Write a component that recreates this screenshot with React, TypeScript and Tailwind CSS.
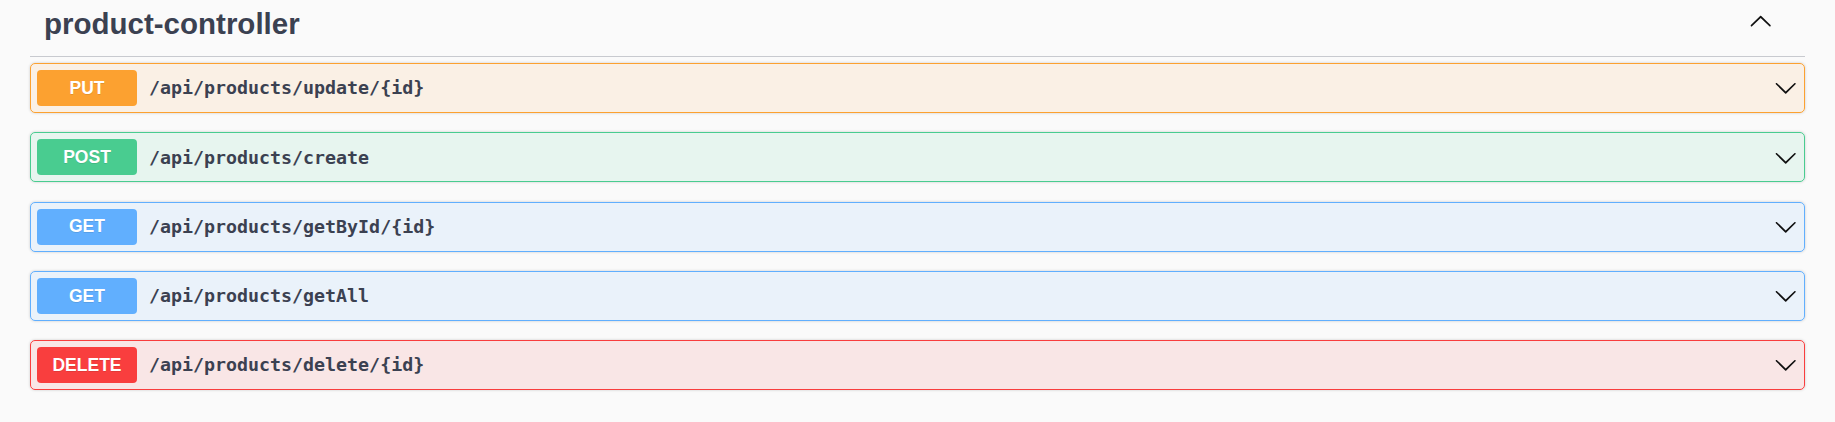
import React from "react";

const ops = [
  { method: "PUT", path: "/api/products/update/{id}", color: "#fca130", bg: "rgba(252,161,48,0.1)" },
  { method: "POST", path: "/api/products/create", color: "#49cc90", bg: "rgba(73,204,144,0.1)" },
  { method: "GET", path: "/api/products/getById/{id}", color: "#61affe", bg: "rgba(97,175,254,0.1)" },
  { method: "GET", path: "/api/products/getAll", color: "#61affe", bg: "rgba(97,175,254,0.1)" },
  { method: "DELETE", path: "/api/products/delete/{id}", color: "#f93e3e", bg: "rgba(249,62,62,0.1)" },
];

function Arrow({ up = false }: { up?: boolean }) {
  return (
    <svg
      width="23.4"
      height="23.4"
      viewBox="0 0 20 20"
      className={up ? "rotate-180 shrink-0" : "shrink-0"}
      aria-hidden="true"
    >
      <path
        fill="#111"
        d="M17.418 6.109c.272-.268.709-.268.979 0s.271.701 0 .969l-7.908 7.83c-.27.268-.707.268-.979 0l-7.908-7.83c-.27-.268-.27-.701 0-.969.271-.268.709-.268.979 0L10 13.25l7.418-7.141z"
      />
    </svg>
  );
}

export default function App() {
  return (
    <div className="min-h-screen w-full bg-[#fafafa] px-[30px]" style={{ fontFamily: '"Liberation Sans", Arial, sans-serif' }}>
      <div className="flex h-[57px] items-start justify-between border-b border-[#c8cacf]">
        <h4 className="pl-[14px] pt-[8.5px] text-[29.5px] font-bold leading-[29px] text-[#3b4151]">
          product-controller
        </h4>
        <div className="mr-[33px] mt-[10px]">
          <Arrow up />
        </div>
      </div>
      <div className="flex flex-col gap-[19.3px] pt-[6px]">
        {ops.map((op, i) => (
          <div
            key={i}
            className="flex h-[50px] items-center rounded-[5px] border px-[6px] shadow-[0_0_3px_rgba(0,0,0,0.19)]"
            style={{ borderColor: op.color, backgroundColor: op.bg }}
          >
            <div
              className="flex h-[36px] w-[100px] shrink-0 items-center justify-center rounded-[4px] text-[17.5px] font-bold text-white [text-shadow:0_1px_0_rgba(0,0,0,0.1)]"
              style={{ backgroundColor: op.color }}
            >
              {op.method}
            </div>
            <div
              className="flex-1 pl-[12px] text-[18.3px] font-semibold text-[#3b4151]"
              style={{ fontFamily: '"DejaVu Sans Mono", "Liberation Mono", monospace' }}
            >
              {op.path}
            </div>
            <div className="mr-[1px]">
              <Arrow />
            </div>
          </div>
        ))}
      </div>
    </div>
  );
}
